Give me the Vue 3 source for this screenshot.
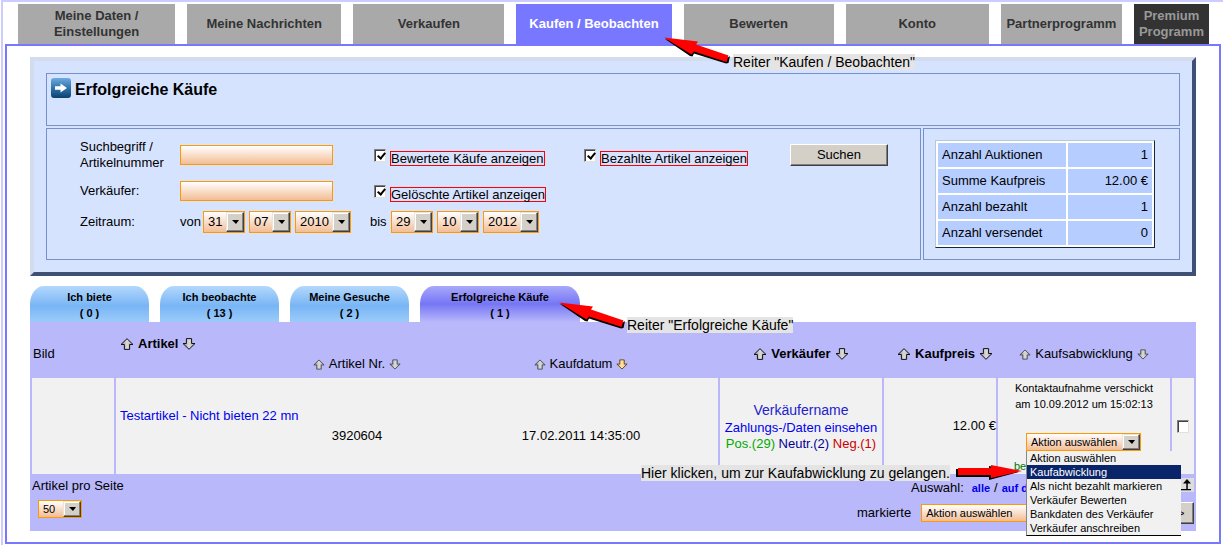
<script setup>
import { ref } from 'vue'

const navTabs = [
  { label: 'Meine Daten / Einstellungen' },
  { label: 'Meine Nachrichten' },
  { label: 'Verkaufen' },
  { label: 'Kaufen / Beobachten', kind: 'active' },
  { label: 'Bewerten' },
  { label: 'Konto' },
  { label: 'Partnerprogramm' },
  { label: 'Premium Programm', kind: 'premium' },
]

const subTabs = [
  { label: 'Ich biete', count: 0 },
  { label: 'Ich beobachte', count: 13 },
  { label: 'Meine Gesuche', count: 2 },
  { label: 'Erfolgreiche Käufe', count: 1, active: true },
]

const stats = [
  ['Anzahl Auktionen', '1'],
  ['Summe Kaufpreis', '12.00 €'],
  ['Anzahl bezahlt', '1'],
  ['Anzahl versendet', '0'],
]

const dates = [
  { word: 'von', parts: [['Tag von', '31'], ['Monat von', '07'], ['Jahr von', '2010']] },
  { word: 'bis', parts: [['Tag bis', '29'], ['Monat bis', '10'], ['Jahr bis', '2012']] },
]

const actions = [
  'Aktion auswählen',
  'Kaufabwicklung',
  'Als nicht bezahlt markieren',
  'Verkäufer Bewerten',
  'Bankdaten des Verkäufer',
  'Verkäufer anschreiben',
]

const rated = ref(true)
const deleted = ref(true)
const paid = ref(true)
const term = ref('')
const seller = ref('')
const highlighted = ref(1)
</script>

<template>
  <div class="page">
    <svg class="defs" width="0" height="0" aria-hidden="true">
      <defs>
        <linearGradient id="metal" x1="0" y1="0" x2="1" y2="0">
          <stop offset="0" stop-color="#858585" />
          <stop offset="0.5" stop-color="#dcdcdc" />
          <stop offset="1" stop-color="#a0a0a0" />
        </linearGradient>
        <linearGradient id="gold" x1="0" y1="0" x2="1" y2="0">
          <stop offset="0" stop-color="#ffa92e" />
          <stop offset="0.5" stop-color="#ffe6a8" />
          <stop offset="1" stop-color="#ffb040" />
        </linearGradient>
        <linearGradient id="badge" x1="0" y1="0" x2="0" y2="1">
          <stop offset="0" stop-color="#6eaae0" />
          <stop offset="0.5" stop-color="#2f74ab" />
          <stop offset="1" stop-color="#0c416f" />
        </linearGradient>
        <symbol id="up" viewBox="0 0 14 12">
          <path d="M7 .7 L13 6.5 H9.6 V11.4 H4.4 V6.5 H1 Z" />
        </symbol>
        <symbol id="down" viewBox="0 0 14 12">
          <path d="M7 11.3 L13 5.5 H9.6 V.6 H4.4 V5.5 H1 Z" />
        </symbol>
        <symbol id="slanted" viewBox="0 0 68 30">
          <path fill="#000" d="M2 4 L34 11 L32 12 L65 22.500 L67 21 L65.500 28 L63 28.500 L31 18.500 L29.500 21.500 L27 21 Z" />
          <path fill="#f00" d="M1 2.500 L35 6.500 L33 9.500 L65.500 20.500 L63.500 27 L31 16.500 L28.500 19.500 Z" />
        </symbol>
      </defs>
    </svg>

    <nav class="nav" aria-label="Hauptnavigation">
      <a v-for="t in navTabs" :key="t.label" href="#" class="nav-tab" :class="t.kind">
        <span>{{ t.label }}</span>
      </a>
    </nav>

    <main class="main">
      <section class="search">
        <div class="box heading">
          <svg class="badge" width="20" height="20" viewBox="0 0 20 20" aria-hidden="true">
            <rect width="20" height="20" rx="3" fill="url(#badge)" />
            <path fill="#fff" d="M4 8.200 H9.500 V5.400 L16 10 L9.500 14.600 V11.800 H4 Z" />
          </svg>
          <h1>Erfolgreiche Käufe</h1>
        </div>
        <div class="split">
          <form class="box form" @submit.prevent>
            <label for="term">Suchbegriff /<br>Artikelnummer</label>
            <input id="term" v-model="term" class="field" type="text">
            <div class="check">
              <input id="rated" v-model="rated" type="checkbox">
              <label for="rated">Bewertete Käufe anzeigen</label>
            </div>
            <div class="check">
              <input id="paid" v-model="paid" type="checkbox">
              <label for="paid">Bezahlte Artikel anzeigen</label>
            </div>
            <button class="btn submit" type="submit">Suchen</button>

            <label for="seller">Verkäufer:</label>
            <input id="seller" v-model="seller" class="field" type="text">
            <div class="check wide">
              <input id="deleted" v-model="deleted" type="checkbox">
              <label for="deleted">Gelöschte Artikel anzeigen</label>
            </div>

            <span>Zeitraum:</span>
            <div class="dates">
              <div v-for="d in dates" :key="d.word" class="date">
                <span class="word">{{ d.word }}</span>
                <span v-for="p in d.parts" :key="p[0]" class="select" :class="{ year: p[1].length > 2 }">
                  <select :aria-label="p[0]"><option>{{ p[1] }}</option></select>
                </span>
              </div>
            </div>
          </form>
          <div class="box totals">
            <table class="stats">
              <tbody>
                <tr v-for="s in stats" :key="s[0]">
                  <th scope="row">{{ s[0] }}</th>
                  <td>{{ s[1] }}</td>
                </tr>
              </tbody>
            </table>
          </div>
        </div>
      </section>

      <nav class="sub" aria-label="Kaufen und Beobachten">
        <a v-for="t in subTabs" :key="t.label" href="#" class="sub-tab" :class="{ active: t.active }">
          {{ t.label }}<br>( {{ t.count }} )
        </a>
      </nav>

      <section class="list">
        <table class="items">
          <colgroup>
            <col class="c-image"><col><col class="c-seller"><col class="c-price"><col class="c-state"><col class="c-mark">
          </colgroup>
          <thead>
            <tr>
              <th class="left" scope="col">Bild</th>
              <th scope="col">
                <div class="sort strong first">
                  <svg class="ico"><use href="#up" /></svg>Artikel<svg class="ico"><use href="#down" /></svg>
                </div>
                <div class="pair">
                  <div class="sort">
                    <svg class="ico small"><use href="#up" /></svg>Artikel Nr.<svg class="ico small"><use href="#down" /></svg>
                  </div>
                  <div class="sort">
                    <svg class="ico small"><use href="#up" /></svg>Kaufdatum<svg class="ico small gold"><use href="#down" /></svg>
                  </div>
                </div>
              </th>
              <th scope="col">
                <div class="sort strong"><svg class="ico"><use href="#up" /></svg>Verkäufer<svg class="ico"><use href="#down" /></svg></div>
              </th>
              <th class="price-head" scope="col">
                <div class="sort strong"><svg class="ico"><use href="#up" /></svg>Kaufpreis<svg class="ico"><use href="#down" /></svg></div>
              </th>
              <th scope="col">
                <div class="sort"><svg class="ico small"><use href="#up" /></svg>Kaufsabwicklung<svg class="ico small"><use href="#down" /></svg></div>
              </th>
              <th></th>
            </tr>
          </thead>
          <tbody>
            <tr>
              <td></td>
              <td>
                <a href="#" class="article">Testartikel - Nicht bieten 22 mn</a>
                <div class="pair"><span>3920604</span><span>17.02.2011 14:35:00</span></div>
              </td>
              <td class="seller">
                <a href="#" class="name">Verkäufername</a>
                <a href="#">Zahlungs-/Daten einsehen</a>
                <div><span class="pos">Pos.(29)</span> <span class="neu">Neutr.(2)</span> <span class="neg">Neg.(1)</span></div>
              </td>
              <td class="price">12.00 €</td>
              <td class="state">
                <div>Kontaktaufnahme verschickt<br>am 10.09.2012 um 15:02:13</div>
                <div class="combo">
                  <span class="select small">
                    <select aria-label="Aktion"><option v-for="a in actions" :key="a">{{ a }}</option></select>
                  </span>
                  <ul class="menu" role="listbox" aria-label="Aktion auswählen">
                    <li
                      v-for="(a, i) in actions" :key="a" role="option"
                      :aria-selected="i === highlighted" :class="{ on: i === highlighted }"
                      @mouseenter="highlighted = i"
                    >{{ a }}</li>
                  </ul>
                </div>
                <div class="paid">bezahlt</div>
              </td>
              <td class="mark"><input type="checkbox" aria-label="Artikel markieren"></td>
            </tr>
          </tbody>
        </table>

        <footer class="foot">
          <div class="per-page">
            <label for="per">Artikel pro Seite</label>
            <span class="select small"><select id="per"><option>50</option></select></span>
          </div>
          <div class="bulk">
            <div class="choose">
              <span>Auswahl:</span><a href="#">alle</a><span class="slash">/</span><a href="#">auf dieser Seite</a>
              <button class="top" type="button" aria-label="Nach oben">
                <svg width="16" height="14" viewBox="0 0 16 14" aria-hidden="true">
                  <path d="M9 1 L13 5.500 H5 Z" /><path d="M8.300 4 H9.800 V11 H13 V12.200 H3 V11 H8.300 Z" />
                </svg>
              </button>
            </div>
            <div class="marked">
              <label for="bulk">markierte</label>
              <span class="select small grow"><select id="bulk"><option>Aktion auswählen</option></select></span>
              <button class="btn go" type="button">&gt;&gt;</button>
            </div>
          </div>
        </footer>
      </section>
    </main>

    <svg class="pointer p-nav" width="68" height="30" aria-hidden="true"><use href="#slanted" /></svg>
    <div class="note n-nav">Reiter "Kaufen / Beobachten"</div>
    <svg class="pointer p-sub" width="68" height="30" aria-hidden="true"><use href="#slanted" /></svg>
    <div class="note n-sub">Reiter "Erfolgreiche Käufe"</div>
    <svg class="pointer p-menu" width="68" height="18" viewBox="0 0 68 18" aria-hidden="true">
      <path fill="#000" d="M1 6 H34 V3 L64 9 L34 17 V14 H1 Z" />
      <path fill="#f00" d="M3 5 H36 V2 L67 8 L36 15 V12 H3 Z" />
    </svg>
    <div class="note n-menu">Hier klicken, um zur Kaufabwicklung zu gelangen.</div>
  </div>
</template>

<style>
body {
  margin: 0;
  background: #fff;
}
</style>

<style scoped>
.page {
  position: relative;
  box-sizing: border-box;
  min-height: 100vh;
  margin-left: 1px;
  padding: 2px 2px 1px;
  border-top: 2px solid #ccf;
  border-left: 2px solid #ccf;
  font: 13px/16px "Liberation Sans", Arial, sans-serif;
  color: #000;
}
.page * {
  box-sizing: border-box;
}
.defs {
  position: absolute;
}
a {
  text-decoration: none;
  color: #00e;
}
input,
select,
button {
  margin: 0;
  font: inherit;
  color: inherit;
}

/* main navigation */
.nav {
  display: grid;
  grid-template-columns: 157fr 154fr 151fr 155fr 150fr 143fr 121fr 75fr;
  gap: 12px;
  height: 40px;
  padding: 0 12px 0 13px;
}
.nav-tab {
  display: flex;
  align-items: center;
  justify-content: center;
  padding: 0 2px;
  background: #a9a9a9;
  color: #333;
  font-weight: bold;
  text-align: center;
}
.nav-tab:first-child {
  padding: 0 24px;
}
.nav-tab.active {
  background: #77f;
  color: #fff;
}
.nav-tab.premium {
  background: #333;
  color: #999;
}
.main {
  padding: 11px 23px;
  border: 2px solid #77f;
}

/* search panel */
.search {
  padding: 12px;
  border: 4px solid;
  border-color: #d2dcee #405075 #405075 #d2dcee;
  background: #d6e3ff;
}
.box {
  border: 1px solid #7590cc;
}
.heading {
  display: flex;
  align-items: flex-start;
  gap: 4px;
  height: 53px;
  padding: 4px;
}
h1 {
  margin: 0;
  font-size: 16px;
  line-height: 24px;
}
.split {
  display: grid;
  grid-template-columns: 875fr 257fr;
  gap: 2px;
  margin-top: 2px;
}
.form {
  display: grid;
  grid-template-columns: 100px 194px 210px 206px 98px;
  grid-template-rows: 36px 36px 26px;
  align-items: center;
  padding: 8px 0 24px 33px;
}
.field {
  width: 153px;
  height: 20px;
  border: 1px solid #f90;
  background: linear-gradient(#fff, #f3bd94);
}
.check {
  display: flex;
  align-items: flex-start;
  align-self: start;
  gap: 4px;
  margin-top: 12px;
}
.check.wide {
  grid-column: span 3;
}
.check label {
  margin-top: 2px;
  border: 1px solid #f00;
  line-height: 13px;
}
input[type="checkbox"] {
  position: relative;
  appearance: none;
  flex: none;
  width: 12px;
  height: 13px;
  border: 1px solid;
  border-color: #808080 #e4e0d8 #e4e0d8 #808080;
  background: #fff;
  box-shadow: inset 1px 1px #404040;
}
input[type="checkbox"]:checked::after {
  content: "";
  position: absolute;
  left: 4px;
  top: 1px;
  width: 3px;
  height: 6px;
  border: solid #000;
  border-width: 0 2px 2px 0;
  transform: rotate(40deg);
}
.btn {
  padding: 0;
  border: 1px solid;
  border-color: #fff #404040 #404040 #fff;
  background: #d4d0c8;
  box-shadow: inset -1px -1px #808080;
}
.submit {
  height: 22px;
}
.dates {
  grid-column: span 4;
  display: flex;
  gap: 19px;
}
.date {
  display: flex;
  align-items: center;
  gap: 4px;
}
.word {
  width: 19px;
}
.date + .date .word {
  width: 17px;
}

/* drop-downs */
.select {
  position: relative;
  display: inline-block;
  width: 42px;
  height: 22px;
}
.select select {
  appearance: none;
  display: block;
  width: 100%;
  height: 100%;
  padding: 0 0 0 4px;
  border: 1px solid #f90;
  border-radius: 0;
  background: linear-gradient(#fff, #f3bd94);
}
.select::before {
  content: "";
  position: absolute;
  top: 1px;
  right: 1px;
  bottom: 1px;
  width: 16px;
  border: 1px solid;
  border-color: #e8e6e0 #404040 #404040 #e8e6e0;
  background: #d4d0c8;
  box-shadow: inset -1px -1px #808080, inset 1px 1px #fff;
  pointer-events: none;
}
.select::after {
  content: "";
  position: absolute;
  top: 50%;
  right: 6px;
  margin-top: -2px;
  border: 4px solid transparent;
  border-top-color: #000;
  border-bottom: 0;
  border-right-width: 3px;
  pointer-events: none;
}
.select.year {
  width: 56px;
}
.select.small {
  height: 18px;
  font-size: 11px;
}

/* totals */
.totals {
  padding: 11px;
}
.stats {
  width: 220px;
  border: 1px solid;
  border-color: #b4c8d8 #0e2c3c #0e2c3c #b4c8d8;
  border-spacing: 2px;
  background: #fff;
}
.stats th,
.stats td {
  height: 24px;
  padding: 0 4px;
  background: #b5cdff;
  font-weight: normal;
  text-align: left;
}
.stats td {
  width: 84px;
  text-align: right;
}

/* secondary tabs */
.sub {
  display: flex;
  gap: 11px;
  margin-top: 10px;
}
.sub-tab {
  width: 119px;
  height: 36px;
  padding-top: 3px;
  border-radius: 14px 14px 0 0 / 18px 18px 0 0;
  background: linear-gradient(#b4d8fc, #78b5f5 55%, #9ccbfa);
  color: #000;
  font-size: 11px;
  font-weight: bold;
  text-align: center;
}
.sub-tab.active {
  width: 160px;
  background: linear-gradient(#a8a8fa, #7676f6 50%, #b8b8fb);
}

/* purchases */
.list {
  background: #b8b8fb;
}
.items {
  width: 100%;
  table-layout: fixed;
  border-spacing: 2px;
}
.c-image { width: 82px; }
.c-seller { width: 162px; }
.c-price { width: 112px; }
.c-state { width: 172px; }
.c-mark { width: 22px; }
.items th {
  height: 52px;
  padding: 8px 0 0;
  font-weight: normal;
}
.items .left {
  padding-left: 1px;
  text-align: left;
}
.items .price-head {
  padding-left: 10px;
}
.items td {
  height: 96px;
  padding: 0;
  background: #f1f1f1;
}
.sort {
  display: flex;
  align-items: center;
  justify-content: center;
  gap: 4px;
  line-height: 20px;
}
.sort.strong {
  font-weight: bold;
}
.sort.first {
  justify-content: flex-start;
  padding-left: 4px;
}
.ico {
  flex: none;
  width: 14px;
  height: 12px;
  fill: url(#metal);
  stroke: #111;
}
.ico.small {
  width: 12px;
  height: 11px;
  stroke: #444;
}
.ico.gold {
  fill: url(#gold);
  stroke: #553a18;
}
.pair {
  display: grid;
  grid-template-columns: 129fr 224fr 224fr 25fr;
  line-height: 20px;
  text-align: center;
}
.pair > :first-child {
  grid-column-start: 2;
}
.article {
  display: block;
  padding-left: 4px;
  line-height: 20px;
}
.seller {
  text-align: center;
}
.seller a {
  display: block;
}
.seller .name {
  color: #22c;
  font-size: 14px;
  line-height: 20px;
}
.pos { color: #0a0; }
.neu { color: #009; }
.neg { color: #c00; }
.price {
  text-align: right;
}
.state {
  vertical-align: top;
  font-size: 11px;
  text-align: center;
}
.items .state {
  padding-top: 2px;
}
.combo {
  position: relative;
  width: 115px;
  height: 18px;
  margin: 21px 0 7px 28px;
}
.combo .select {
  display: block;
  width: 100%;
}
.menu {
  position: absolute;
  z-index: 2;
  top: 100%;
  left: 0;
  width: 155px;
  margin: 0;
  padding: 0;
  border-bottom: 1px solid #000;
  border-left: 1px solid #888;
  background: #f1f1f1;
  line-height: 14px;
  list-style: none;
  text-align: left;
}
.menu li {
  padding-left: 3px;
}
.menu .on {
  background: #0a246a;
  color: #fff;
}
.paid {
  padding-left: 16px;
  color: #070;
  text-align: left;
}
.mark {
  text-align: center;
}
.mark input {
  display: block;
  margin: 0 auto;
}

/* table footer */
.foot {
  display: flex;
  justify-content: space-between;
  height: 55px;
  padding: 2px;
}
.per-page label {
  display: block;
  margin-bottom: 6px;
}
.per-page .select {
  display: block;
  width: 44px;
  margin-left: 6px;
}
.bulk {
  width: 337px;
}
.choose {
  display: flex;
  align-items: center;
  height: 20px;
  padding-left: 54px;
}
.choose a {
  font-size: 11px;
  font-weight: bold;
}
.choose > a:nth-of-type(1) {
  margin-left: 8px;
}
.slash {
  margin: 0 4px;
}
.top {
  align-self: flex-start;
  width: 16px;
  height: 14px;
  margin-left: auto;
  padding: 0;
  border: 0;
  background: #ddd;
}
.top svg {
  display: block;
}
.marked {
  display: flex;
  align-items: center;
  gap: 10px;
  margin-top: 4px;
}
.marked .grow {
  flex: 1;
}
.go {
  width: 32px;
  height: 22px;
  font-size: 11px;
}

/* annotations over the page */
.pointer,
.note {
  position: absolute;
  z-index: 3;
}
.note {
  background: #e4e4e4;
  font-size: 14px;
  white-space: nowrap;
}
.p-nav { left: 660px; top: 33px; }
.n-nav { left: 730px; top: 52px; }
.p-sub { left: 555px; top: 298px; }
.n-sub { left: 624px; top: 315px; }
.p-menu { left: 952px; top: 461px; }
.n-menu { left: 638px; top: 463px; }
</style>
